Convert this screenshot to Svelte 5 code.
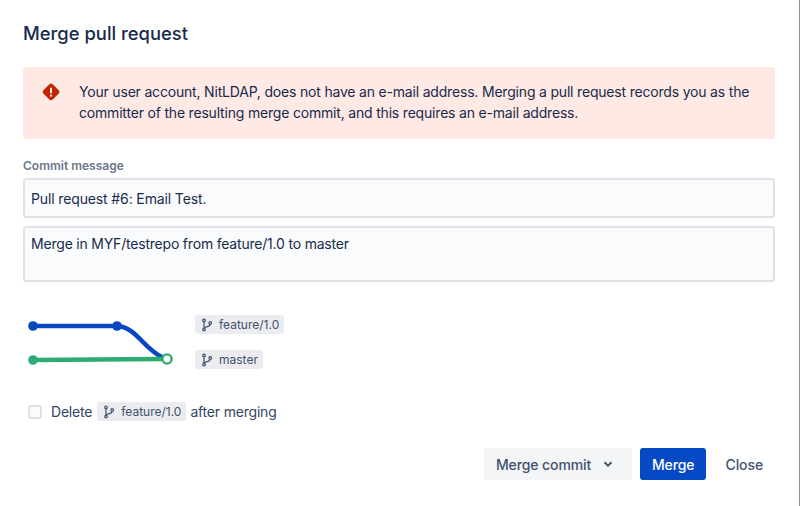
<script>
  let deleteBranch = false;
  const source = 'feature/1.0';
  const target = 'master';
</script>

{#snippet branch(name)}
  <span class="lozenge">
    <svg class="branch-icon" viewBox="0 0 12 14" width="12" height="14" aria-hidden="true">
      <circle cx="3" cy="2.4" r="1.3" />
      <circle cx="3" cy="11.6" r="1.3" />
      <circle cx="9.2" cy="5" r="1.3" />
      <path d="M3 3.7v6.6M3.2 10c.6-1.6 5.6-.6 6-3.7" />
    </svg>
    <span>{name}</span>
  </span>
{/snippet}

<main class="dialog">
  <h2>Merge pull request</h2>

  <div class="banner">
    <svg class="error-icon" viewBox="0 0 18 18" width="18" height="18" aria-hidden="true">
      <path class="diamond" d="M7.2 1.5a2.6 2.6 0 0 1 3.7 0l5.6 5.6a2.6 2.6 0 0 1 0 3.6l-5.6 5.6a2.6 2.6 0 0 1-3.7 0l-5.6-5.6a2.6 2.6 0 0 1 0-3.6z" />
      <rect x="8" y="4.4" width="2" height="6" rx="1" fill="#ffe9e4" />
      <circle cx="9" cy="12.7" r="1.1" fill="#ffe9e4" />
    </svg>
    <p>Your user account, NitLDAP, does not have an e-mail address. Merging a pull request records you as the committer of the resulting merge commit, and this requires an e-mail address.</p>
  </div>

  <div class="label">Commit message</div>
  <div class="field title-field">Pull request #6: Email Test.</div>
  <div class="field body-field">Merge in MYF/testrepo from feature/1.0 to master</div>

  <div class="graph-row">
    <svg class="graph" viewBox="0 0 145 50" width="145" height="50" aria-hidden="true">
      <path class="line-blue" d="M5 7H89C108 8 116 30 134 38" />
      <circle cx="5" cy="7" r="4.8" fill="#0747c0" />
      <circle cx="89" cy="7" r="4.8" fill="#0747c0" />
      <path class="line-green" d="M5 41L134 40" />
      <circle cx="5" cy="41" r="4.8" fill="#2eab70" />
      <circle cx="139" cy="40" r="4.6" fill="#fff" stroke="#2eab70" stroke-width="2.4" />
    </svg>
    <div class="branches">
      {@render branch(source)}
      {@render branch(target)}
    </div>
  </div>

  <label class="delete-row">
    <input type="checkbox" bind:checked={deleteBranch} />
    <span class="box"></span>
    <span>Delete</span>
    {@render branch(source)}
    <span class="after">after merging</span>
  </label>

  <footer>
    <button class="btn strategy">
      Merge commit
      <svg viewBox="0 0 10 6" width="10" height="6" aria-hidden="true">
        <path d="M1.5 1.2L5 4.6l3.5-3.4" />
      </svg>
    </button>
    <button class="btn primary">Merge</button>
    <button class="btn plain">Close</button>
  </footer>
</main>

<style>
  :global(body) {
    background: #fff;
  }

  .dialog {
    box-sizing: border-box;
    width: 800px;
    height: 506px;
    padding: 21px 24px 0 23px;
    border-right: 1px solid #8a8f98;
    font-family: Inter, "Liberation Sans", sans-serif;
    font-size: 14px;
    letter-spacing: -0.2px;
    color: #172b4d;
    overflow: hidden;
  }

  h2 {
    margin: 0;
    font-size: 18.4px;
    line-height: 24px;
    font-weight: 500;
    letter-spacing: 0;
  }

  .banner {
    display: flex;
    gap: 19px;
    height: 72px;
    margin-top: 22px;
    padding: 15px 16px 0 19px;
    box-sizing: border-box;
    background: #ffe9e4;
    border-radius: 3px;
  }

  .error-icon {
    flex: none;
    margin-top: 1px;
  }

  .diamond {
    fill: #bf2600;
  }

  .banner p {
    margin: 0;
    line-height: 20.5px;
    letter-spacing: -0.19px;
  }

  .label {
    margin-top: 19px;
    font-size: 12px;
    line-height: 16px;
    font-weight: 600;
    letter-spacing: 0;
    color: #6b778c;
  }

  .field {
    box-sizing: border-box;
    padding: 0 6px;
    background: #fafbfc;
    border: 2px solid #dfe1e6;
    border-radius: 3px;
    line-height: 20px;
  }

  .title-field {
    height: 40px;
    margin-top: 4px;
    padding-top: 9px;
    letter-spacing: -0.13px;
  }

  .body-field {
    height: 56px;
    margin-top: 8px;
    padding-top: 6px;
  }

  .graph-row {
    display: flex;
    gap: 22px;
    margin-top: 33px;
    padding-left: 5px;
  }

  .branches {
    display: flex;
    flex-direction: column;
    align-items: flex-start;
    gap: 16px;
  }

  .lozenge {
    display: inline-flex;
    align-items: center;
    gap: 6px;
    height: 19px;
    padding: 0 5px 0 6px;
    background: #ebecf0;
    border-radius: 3px;
    font-size: 12px;
    letter-spacing: 0;
    color: #42526e;
  }

  .branch-icon {
    flex: none;
    fill: none;
    stroke: #42526e;
    stroke-width: 1.2;
  }

  .graph {
    flex: none;
    display: block;
    margin-top: 4px;
  }

  .line-blue,
  .line-green {
    fill: none;
    stroke-width: 4.6;
  }

  .line-blue {
    stroke: #0747c0;
  }

  .line-green {
    stroke: #2eab70;
  }

  .delete-row {
    display: flex;
    align-items: center;
    gap: 5px;
    margin-top: 33px;
    height: 19px;
    color: #344563;
  }

  .delete-row input {
    position: absolute;
    opacity: 0;
  }

  .box {
    box-sizing: border-box;
    width: 14px;
    height: 14px;
    margin: 0 4px 0 5px;
    background: #fafbfc;
    border: 2px solid #dfe1e6;
    border-radius: 3px;
  }

  .after {
    margin-left: -1px;
  }

  footer {
    display: flex;
    justify-content: flex-end;
    gap: 8px;
    margin-top: 27px;
  }

  .btn {
    height: 32px;
    padding: 0 12px;
    border: none;
    border-radius: 3px;
    font: 500 14px Inter, "Liberation Sans", sans-serif;
    letter-spacing: -0.1px;
    color: #42526e;
    background: none;
  }

  .strategy {
    display: flex;
    align-items: center;
    gap: 12px;
    width: 148px;
    background: #f4f5f7;
  }

  .strategy svg {
    fill: none;
    stroke: #42526e;
    stroke-width: 2;
  }

  .primary {
    background: #0549c4;
    color: #fff;
  }

  .plain {
    padding-left: 11px;
  }
</style>
